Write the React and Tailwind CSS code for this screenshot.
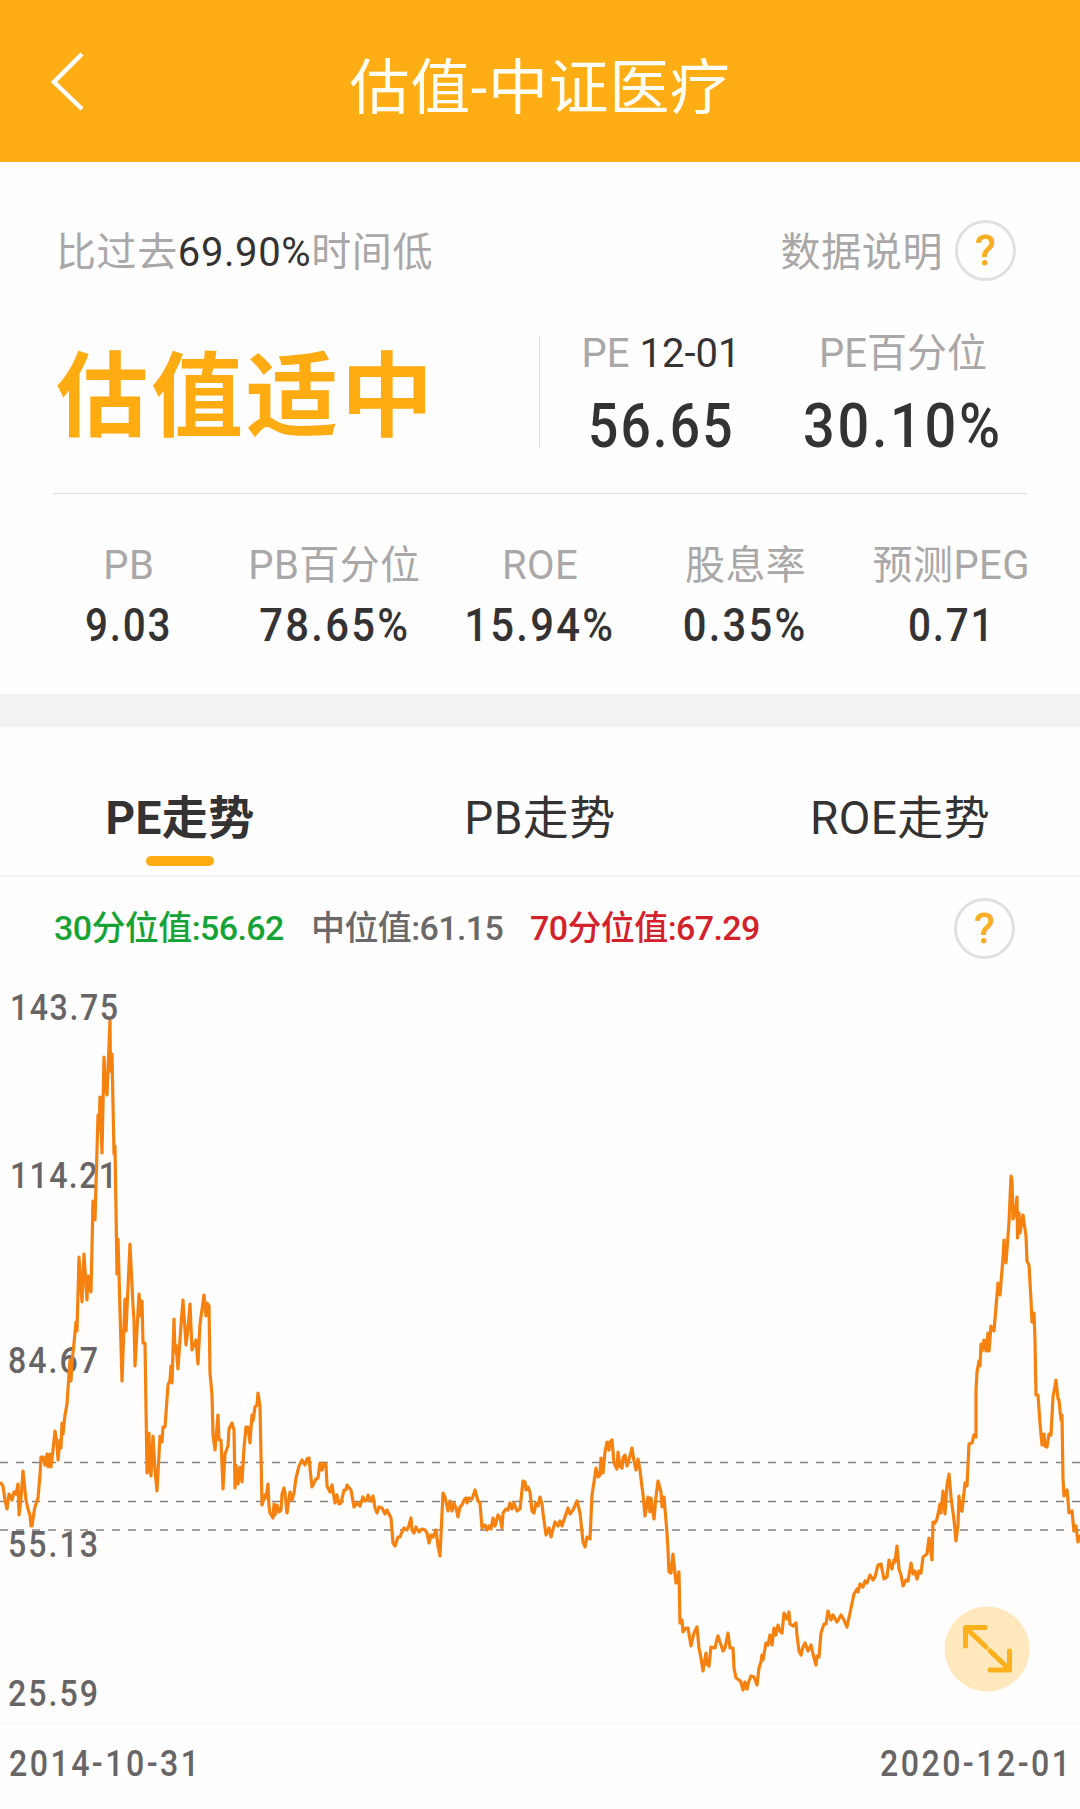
import React from 'react';
import clsx from 'clsx';

const stats = [
  { label: 'PB', value: '9.03' },
  { label: 'PB百分位', value: '78.65%' },
  { label: 'ROE', value: '15.94%' },
  { label: '股息率', value: '0.35%' },
  { label: '预测PEG', value: '0.71' },
];

const tabs = ['PE走势', 'PB走势', 'ROE走势'];

// digits are squeezed horizontally and spaced out, like a DIN face
const DIGIT_SCALE = 0.88;

const axisLabels = [
  { text: '143.75', x: 10, y: 1021, width: 108 },
  { text: '114.21', x: 10, y: 1188.5, width: 107 },
  { text: '84.67', x: 8, y: 1373.5, width: 90 },
  { text: '55.13', x: 8, y: 1558, width: 90 },
  { text: '25.59', x: 8, y: 1706.5, width: 90 },
  { text: '2014-10-31', x: 9, y: 1776.5, width: 190 },
  { text: '2020-12-01', x: 880, y: 1776.5, width: 190 },
];

// 70th percentile, median and 30th percentile
const guides = [1463.5, 1502.5, 1531];

const series = `
0,1482 3,1486 5,1500 7,1509 9,1494 12,1500 14,1492 16,1494 18,1484 19,1515 21,1498 23,1471 26,1500 28,1509 30,1515 31,1526 32,1526 34,1512 35,1507 38,1498 40,1475 41,1457 43,1457
45,1465 47,1454 48,1467 50,1454 51,1467 53,1450 55,1431 57,1444 58,1460 60,1440 61,1448 62,1423 63,1434 65,1415 67,1404 68,1389 70,1360 71,1381 72,1362 74,1343 76,1322 77,1331
79,1257 82,1302 84,1254 87,1300 88,1276 91,1292 93,1201 95,1220 98,1115 99,1130 100,1097 102,1153 104,1057 105,1082 107,1095 110,1021 110.5,1071 112,1054 114,1154 115,1146
117,1274 118,1239 122,1381 125,1299 126,1331 130,1244 133,1306 134,1320 135,1366 139,1294 141,1316 142,1301 143,1343 145,1343 147,1473 149,1433 150,1470 151,1476 153,1436 155,1470 157,1491
160,1436 162,1442 163,1427 165,1427 168,1385 170,1380 171,1366 172,1383 174,1319 175,1352 176,1345 178,1369 181,1325 183,1300 185,1330 186,1345 188,1328 190,1304 192,1350 194,1345 196,1340 198,1364
200,1324 204,1295 206,1316 207,1303 209,1306 210,1373 212,1395 213,1435 215,1450 218,1415 219,1440 221,1440 223,1489 225,1454 228,1446 229,1429 232,1423 234,1430 235,1488 236,1465 238,1484 240,1467 242,1482
244,1448 246,1427 248,1427 250,1443 252,1415 253,1421 255,1407 257,1405 258,1393 260,1406 262,1505 265,1495 266,1498 268,1484 269,1506 270,1513 273,1518 274,1504 275,1515 277,1505 279,1512 281,1510 282,1494
284,1488 285,1493 287,1513 290,1492 292,1500 294,1493 296,1478 299,1466 302,1460 305,1465 307,1459 309,1458 311,1478 312,1487 316,1479 318,1478 320,1463 322,1470 324,1463 326,1465 327,1486 330,1492 332,1485 335,1503
337,1495 339,1504 341,1503 344,1490 346,1490 347,1485 351,1490 354,1507 357,1503 360,1506 363,1497 365,1501 367,1500 368,1495 371,1501 373,1496 375,1508 377,1513 379,1507 382,1508 385,1514 387,1510 391,1518
393,1543 395,1546 398,1537 400,1537 402,1532 404,1528 407,1530 409,1525 411,1518 412,1530 414,1533 416,1527 419,1532 422,1529 425,1530 427,1533 429,1543 431,1535 433,1537 436,1530 438,1546 440,1556 443,1493
445,1497 448,1511 450,1501 452,1511 454,1503 456,1508 458,1517 460,1507 462,1505 464,1500 466,1498 467,1503 469,1498 472,1499 475,1490 478,1501 480,1503 482,1528 485,1525 487,1530 489,1526 491,1529 493,1518
495,1526 498,1515 500,1518 502,1528 503,1513 506,1509 508,1510 510,1503 512,1509 514,1503 517,1511 520,1509 523,1481 525,1482 526,1490 528,1487 530,1492 532,1511 534,1513 536,1503 538,1506 540,1497 542,1504 543,1513
546,1535 549,1528 551,1537 555,1522 558,1526 560,1521 562,1526 565,1517 568,1508 570,1514 573,1510 577,1501 580,1513 583,1542 585,1547 587,1537 590,1539 592,1495 594,1482 596,1468 598,1477 600,1475 601,1458
603,1473 605,1452 607,1442 609,1450 610,1442 612,1440 614,1463 617,1469 618,1452 620,1466 622,1468 623,1458 625,1455 627,1466 630,1456 632,1448 634,1461 636,1470 638,1459 640,1470 642,1487 643,1494 645,1516
648,1497 650,1512 651,1498 654,1519 656,1497 658,1481 661,1492 662,1507 664,1497 667,1533 668,1550 669,1572 671,1573 673,1554 676,1583 679,1572 680,1623 682,1620 683,1632 686,1628 688,1628 690,1640 691,1646
694,1633 697,1627 699,1648 701,1658 703,1671 706,1653 707,1664 709,1666 711,1647 715,1648 717,1639 718,1636 721,1645 723,1651 725,1648 728,1633 730,1648 733,1648 734,1668 736,1678 739,1680 741,1682 743,1690
745,1682 747,1689 749,1681 751,1676 754,1677 757,1685 759,1668 761,1662 762,1655 763,1660 766,1643 768,1645 770,1635 772,1645 774,1628 776,1635 778,1625 780,1631 782,1633 784,1613 787,1619 789,1612 790,1624 793,1626
796,1623 797,1635 799,1651 801,1655 803,1647 805,1643 808,1651 811,1645 813,1654 816,1665 817,1656 819,1657 821,1633 824,1624 826,1624 828,1611 831,1620 833,1615 837,1622 841,1615 844,1620 847,1627 851,1608 854,1594
857,1589 858,1592 860,1584 863,1587 865,1581 867,1583 870,1575 873,1580 875,1577 878,1565 881,1564 884,1579 887,1577 889,1560 892,1569 894,1560 895,1562 897,1546 899,1569 901,1575 903,1586 906,1580 908,1581 911,1563
913,1574 915,1571 917,1579 919,1571 921,1573 923,1557 927,1554 929,1538 932,1560 933,1522 935,1523 937,1519 940,1504 941,1513 943,1491 945,1514 947,1485 949,1474 951,1497 954,1520 956,1541 958,1525 959,1496
960,1509 962,1511 965,1483 967,1486 969,1444 972,1443 974,1435 976,1437 976,1390 977,1372 979,1361 980,1366 981,1344 982,1351 984,1340 986,1351 988,1333 989,1351 991,1326 994,1331 998,1283 1000,1295 1003,1258
1004,1240 1006,1263 1009,1222 1011,1176 1012,1180 1013,1219 1015,1213 1017,1197 1017.5,1238 1019,1213 1020,1233 1023,1215 1026,1236 1027,1261 1029,1265 1031,1300 1032,1322 1034,1313 1035,1340 1036,1395
1038,1395 1040,1423 1042,1445 1044,1434 1045,1446 1047,1447 1049,1434 1051,1435 1053,1397 1056,1380 1058,1399 1059,1400 1061,1420 1062,1415 1063,1479 1064,1496 1067,1490 1068,1500 1069,1513 1072,1511
1074,1531 1076,1526 1078,1542 1080,1535`;

function Header() {
  return (
    <header className="relative flex h-[162px] items-center justify-center bg-[#ffad14]">
      <svg className="absolute left-[50px] top-[52px]" width="36" height="60" viewBox="0 0 36 60" fill="none">
        <path d="M32 2 L4 30 L32 57" stroke="#fff" strokeWidth="4.5" />
      </svg>
      <h1 className="pt-4 text-[60px] leading-[80px] tracking-[0.6px] text-[#fffdf4]">估值-中证医疗</h1>
    </header>
  );
}

function HelpIcon() {
  return (
    <span className="flex size-[61px] items-center justify-center rounded-full border-[3px] border-[#e0e0e1] text-[43px] leading-none tracking-normal text-[#f8ae24]">
      <span className="[-webkit-text-stroke:1px_#f8ae24]">?</span>
    </span>
  );
}

function KeyFigure({ label, value, className }) {
  return (
    <div className="flex w-[242px] flex-col items-center">
      <div className="whitespace-nowrap pt-px text-[40px] leading-[36px] text-[#a9a7a8]">{label}</div>
      <div className={clsx('mt-[23px] text-[62px] font-medium leading-[62px] text-[#343233]', className)}>{value}</div>
    </div>
  );
}

function Summary() {
  return (
    <section>
      <div className="flex h-[61px] items-center justify-between pl-14 pr-[64px] text-[40px] text-[#a9a7a8]">
        <p className="pt-1 tracking-[0.6px]">
          比过去<span className="text-[#343233]">69.90%</span>时间低
        </p>
        <div className="flex items-center gap-3">
          <span className="pt-1 tracking-[0.6px]">数据说明</span>
          <HelpIcon />
        </div>
      </div>

      <div className="mt-[54px] flex h-[113px]">
        <div className="flex w-[539px] items-center pl-14 pt-[13px] text-[92px] font-bold leading-none tracking-[3px] text-[#ffab12]">
          估值适中
        </div>
        <div className="w-px bg-[#dddfdf]" />
        <KeyFigure
          label={
            <>
              PE <span className="text-[#343233]">12-01</span>
            </>
          }
          value="56.65"
          className="scale-x-[0.86] tracking-[2.5px]"
        />
        <KeyFigure label="PE百分位" value="30.10%" className="scale-x-[0.9] tracking-[3px]" />
      </div>

      <div className="mx-[53px] mt-[45px] h-px bg-[#dde1e2]" />

      <div className="grid grid-cols-5 px-[26px] pt-[52px]">
        {stats.map(({ label, value }) => (
          <div key={label} className="flex flex-col items-center">
            <div className="whitespace-nowrap text-[40px] leading-[40px] tracking-[0.4px] text-[#a9a7a8]">{label}</div>
            <div
              className={clsx(
                'mt-[14px] text-[47px] font-medium leading-[50px] text-[#343233]',
                value.endsWith('%') ? 'scale-x-[0.89] tracking-[2.5px]' : 'scale-x-[0.86] tracking-[2px]'
              )}
            >
              {value}
            </div>
          </div>
        ))}
      </div>
    </section>
  );
}

function Tabs() {
  return (
    <nav className="grid h-[150px] grid-cols-3 border-b-2 border-[#f4f4f4] pt-[62px]">
      {tabs.map((tab, i) => (
        <div key={tab} className="flex flex-col items-center">
          <span className={clsx('text-[46px] leading-[58px] tracking-[0.4px] text-[#343233]', i === 0 && 'font-bold')}>
            {tab}
          </span>
          {i === 0 && <span className="mt-[9px] h-[10px] w-[68px] rounded-full bg-[#ffab12]" />}
        </div>
      ))}
    </nav>
  );
}

function Legend() {
  return (
    <div className="flex h-[102px] items-center justify-between pl-[54px] pr-[65px] text-[34px]">
      <div className="flex font-medium tracking-[-0.6px]">
        <span className="w-[257px] text-[#16a336]">30分位值:56.62</span>
        <span className="w-[219px] text-[#6b6869]">中位值:61.15</span>
        <span className="text-[#d3222b]">70分位值:67.29</span>
      </div>
      <HelpIcon />
    </div>
  );
}

function TrendChart() {
  return (
    <svg className="block" width="1080" height="829" viewBox="0 980 1080 829" fill="none">
      <polygon points={`0,1724 ${series} 1080,1724`} fill="#fffdfc" />
      <path d="M0 1724.5H1080" stroke="#f7f5f5" />
      {guides.map((y) => (
        <path key={y} d={`M0 ${y}H1080`} stroke="#858280" strokeWidth="1.5" strokeDasharray="8 8" />
      ))}
      <g fill="#676566" fontSize="36.5" fontWeight="500">
        {axisLabels.map(({ text, x, y, width }) => (
          <text key={text} transform={`translate(${x} ${y}) scale(${DIGIT_SCALE} 1)`} textLength={width / DIGIT_SCALE}>
            {text}
          </text>
        ))}
      </g>
      <polyline points={series} transform="translate(0 1)" stroke="#f58210" strokeWidth="3.2" strokeLinejoin="round" />
      <circle cx="987" cy="1650" r="42.5" fill="#ffe8bd" />
      <path
        d="M986 1648L966 1629M985 1628.5H965.5V1647M990 1652L1009 1670M990 1671H1009.5V1652"
        stroke="#fbb01c"
        strokeWidth="5"
        strokeLinecap="round"
        strokeLinejoin="round"
      />
    </svg>
  );
}

export default function App() {
  return (
    <div className="h-[1809px] w-[1080px] overflow-hidden bg-[#fefefe] font-['Roboto','Noto_Sans_CJK_SC',sans-serif]">
      <Header />
      <div className="h-[532px] pt-[58px]">
        <Summary />
      </div>
      <div className="h-[33px] bg-[#f3f1f2]" />
      <Tabs />
      <Legend />
      <TrendChart />
    </div>
  );
}
